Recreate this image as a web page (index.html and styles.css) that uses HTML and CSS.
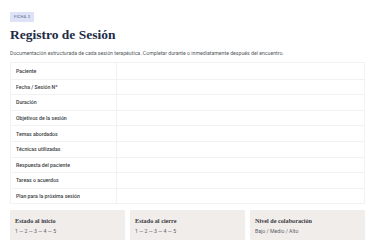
FILE: index.html
```html
<!DOCTYPE html>
<html lang="es">
<head>
<meta charset="utf-8">
<title>Registro de Sesión</title>
<link rel="stylesheet" href="styles.css">
</head>
<body>
<main class="page">
  <span class="badge">FICHA 3</span>
  <h1 class="title">Registro de Sesión</h1>
  <p class="desc">Documentación estructurada de cada sesión terapéutica. Completar durante o inmediatamente después del encuentro.</p>
  <div class="table">
    <div class="row"><div class="label">Paciente</div><div class="value"></div></div>
    <div class="row"><div class="label">Fecha / Sesión Nº</div><div class="value"></div></div>
    <div class="row"><div class="label">Duración</div><div class="value"></div></div>
    <div class="row"><div class="label">Objetivos de la sesión</div><div class="value"></div></div>
    <div class="row"><div class="label">Temas abordados</div><div class="value"></div></div>
    <div class="row"><div class="label">Técnicas utilizadas</div><div class="value"></div></div>
    <div class="row"><div class="label">Respuesta del paciente</div><div class="value"></div></div>
    <div class="row"><div class="label">Tareas o acuerdos</div><div class="value"></div></div>
    <div class="row"><div class="label">Plan para la próxima sesión</div><div class="value"></div></div>
  </div>
  <div class="cards">
    <div class="card"><div class="card-title">Estado al inicio</div><div class="card-sub">1 — 2 — 3 — 4 — 5</div></div>
    <div class="card"><div class="card-title">Estado al cierre</div><div class="card-sub">1 — 2 — 3 — 4 — 5</div></div>
    <div class="card"><div class="card-title">Nivel de colaboración</div><div class="card-sub">Bajo / Medio / Alto</div></div>
  </div>
</main>
</body>
</html>
```
FILE: styles.css
```css
html, body {
  margin: 0;
  padding: 0;
  background: #ffffff;
}
.page {
  padding: 12px 10px 0 10px;
  font-family: Roboto, "Liberation Sans", sans-serif;
  display: flex;
  flex-direction: column;
  align-items: flex-start;
}
.badge {
  display: inline-block;
  background: #dde2f7;
  color: #6f7aa6;
  font-size: 4px;
  line-height: 10px;
  height: 10px;
  padding: 0 4px;
  letter-spacing: 0.2px;
  font-weight: 500;
}
.title {
  margin: 4px 0 0 0;
  font-family: "Liberation Serif", serif;
  font-weight: 700;
  font-size: 13.5px;
  line-height: 18px;
  color: #1e2b47;
}
.desc {
  margin: 5px 0 0 0;
  font-size: 5.2px;
  line-height: 8px;
  color: #555a60;
}
.table {
  margin-top: 5px;
  width: 100%;
  border: 1px solid #f2f2f2;
  box-sizing: border-box;
}
.row {
  display: flex;
  height: 15.6px;
  border-top: 1px solid #f2f2f2;
  box-sizing: border-box;
}
.row:first-child {
  border-top: none;
}
.label {
  width: 106px;
  box-sizing: border-box;
  padding-left: 5px;
  border-right: 1px solid #f2f2f2;
  font-size: 5.2px;
  font-weight: 500;
  color: #3a3d42;
  display: flex;
  align-items: center;
}
.value {
  flex: 1;
}
.cards {
  margin-top: 6px;
  width: 100%;
  display: grid;
  grid-template-columns: 1fr 1fr 1fr;
  gap: 5px;
}
.card {
  background: #f1edeb;
  height: 30px;
  padding: 7px 5px 0 5px;
  box-sizing: border-box;
}
.card-title {
  font-family: "Liberation Serif", serif;
  font-weight: 700;
  font-size: 6.2px;
  line-height: 8px;
  color: #3a3a3e;
}
.card-sub {
  margin-top: 3px;
  font-size: 5.2px;
  line-height: 7px;
  color: #5d6066;
}
```
